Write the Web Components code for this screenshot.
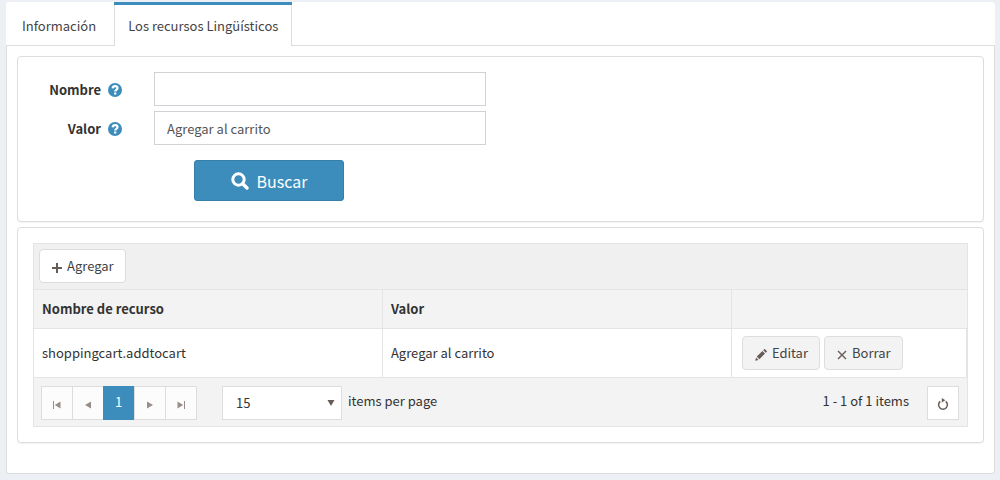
<!DOCTYPE html>
<html lang="es">
<head>
<meta charset="utf-8">
<meta name="viewport" content="width=device-width, initial-scale=1">
<title>Los recursos Lingüísticos</title>
<style>
  html { background: #ecf0f5; }
  body {
    margin: 0;
    padding: 2px 5px 6px 6px;
    font: 13px/20px "Noto Sans CJK SC", "Open Sans", sans-serif;
    color: #333;
    --accent: #3c8dbc;
    --line: #ddd;
    --muted: #f3f3f3;
  }
</style>
</head>
<body>
<tab-box>
  <tab-item slot="tabs">Información</tab-item>
  <tab-item slot="tabs" active>Los recursos Lingüísticos</tab-item>
  <panel-card>
    <search-form></search-form>
  </panel-card>
  <panel-card>
    <resource-grid></resource-grid>
  </panel-card>
</tab-box>

<script>
const define = (name, html, setup) => {
  const template = document.createElement('template');
  template.innerHTML = '<style>*{box-sizing:border-box}</style>' + html;
  customElements.define(name, class extends HTMLElement {
    constructor() {
      super();
      this.attachShadow({ mode: 'open' }).append(template.content.cloneNode(true));
    }
    connectedCallback() { if (setup) setup(this, this.shadowRoot); }
  });
};

const icons = {
  help: ['0 0 14 14', '<circle cx="7" cy="7" r="7" fill="currentColor"/><path d="M4.600 5.300C4.800 3.900 5.700 3.200 7.100 3.200c1.400 0 2.400.8 2.400 2 0 1.700-2.300 1.700-2.300 3.300" fill="none" stroke="#fff" stroke-width="2.200"/><path d="M6.100 9.500h2.200v2H6.100z" fill="#fff"/>'],
  search: ['0 0 18 18', '<circle cx="7.500" cy="7.500" r="5.700" fill="none" stroke="currentColor" stroke-width="3"/><path d="M11.700 11.700l4.300 4.300" stroke="currentColor" stroke-width="3.400" stroke-linecap="round"/>'],
  plus: ['0 0 10 10', '<path d="M5 0v10M0 5h10" stroke="currentColor" stroke-width="2"/>'],
  pencil: ['0 0 12 12', '<path d="M1.800 7.600L7.400 2l2.600 2.600-5.600 5.600zM8.200 1.200L9.100.3q.5-.5 1 0l1.600 1.600q.5.5 0 1l-.9.9zM1.100 8.500l2.400 2.400L.2 11.800z" fill="currentColor"/>'],
  close: ['0 0 10 10', '<path d="M1 1l8 8M9 1L1 9" stroke="currentColor" stroke-width="1.400"/>'],
  first: ['0 0 8 8', '<path d="M0 0h1v8H0zM7.500.5v7L1.800 4z" fill="currentColor"/>'],
  prev: ['0 0 8 8', '<path d="M7 .5v7L1 4z" fill="currentColor"/>'],
  next: ['0 0 8 8', '<path d="M1 .5v7L7 4z" fill="currentColor"/>'],
  last: ['0 0 8 8', '<path d="M7 0h1v8H7zM.5.5v7L6.200 4z" fill="currentColor"/>'],
  down: ['0 0 8 8', '<path d="M.5 1h7L4 7z" fill="currentColor"/>'],
  reload: ['0 0 12 12', '<path d="M3.300 3.300A4.400 4.400 0 1 0 8.700 3.300" fill="none" stroke="currentColor" stroke-width="1.500"/><path d="M4.800 0v4.600L8.300 2.300z" fill="currentColor"/>']
};

define('ui-icon', `
<style>:host{display:inline-flex;flex:none;width:var(--size,10px);height:var(--size,10px)} svg{width:100%;height:100%;display:block}</style>
<svg aria-hidden="true"></svg>`, (el, root) => {
  const [box, body] = icons[el.getAttribute('name')];
  const svg = root.querySelector('svg');
  svg.setAttribute('viewBox', box);
  svg.innerHTML = body;
});

define('tab-box', `
<style>
  :host{display:block}
  nav{display:flex;gap:2px;background:#fff;border-radius:3px 3px 0 0;box-shadow:inset 0 -1px var(--line)}
  main{display:flex;flex-direction:column;gap:5px;padding:10px 10px 30px;background:#fff;border:1px solid var(--line);border-top:0;border-radius:0 0 3px 3px}
</style>
<nav><slot name="tabs"></slot></nav>
<main><slot></slot></main>`);

define('tab-item', `
<style>
  :host{display:block}
  a{display:block;height:44px;padding:11px 16px 10px;border-top:3px solid transparent;color:#444;text-decoration:none}
  :host([active]) a{padding:11px 14px 10px;background:#fff;border-top-color:var(--accent);box-shadow:inset 1px 0 var(--line),inset -1px 0 var(--line)}
</style>
<a href="#"><slot></slot></a>`);

define('panel-card', `
<style>:host{display:block;padding:15px;border:1px solid var(--line);border-radius:4px;background:#fff;box-shadow:0 1px 1px #0000000d}</style>
<slot></slot>`);

define('form-field', `
<style>
  :host{display:grid;grid-template-columns:89px minmax(0,332px);align-items:center;column-gap:32px}
  .caption{display:flex;justify-content:flex-end;align-items:center;gap:7px;padding-top:2px}
  label{font-weight:700}
  ui-icon{--size:14px;color:var(--accent)}
  input{width:100%;height:34px;padding:6px 12px;border:1px solid #d2d2d6;border-radius:0;background:#fff;color:#555;font:inherit;outline:0}
</style>
<div class="caption"><label for="field"></label><ui-icon name="help"></ui-icon></div>
<input id="field" type="text">`, (el, root) => {
  root.querySelector('label').textContent = el.getAttribute('label');
  root.querySelector('input').value = el.getAttribute('value') || '';
});

define('search-form', `
<style>
  :host{display:block}
  form{display:flex;flex-direction:column;gap:5px;padding-bottom:5px}
  .submit{display:flex;padding:10px 0 0 161px}
  button{display:flex;align-items:center;justify-content:center;gap:8px;width:150px;height:41px;border:1px solid #367fa9;border-radius:3px;background:var(--accent);color:#fff;font:inherit;font-size:16px}
  ui-icon{--size:18px}
</style>
<form>
  <form-field label="Nombre"></form-field>
  <form-field label="Valor" value="Agregar al carrito"></form-field>
  <div class="submit"><button type="button"><ui-icon name="search"></ui-icon>Buscar</button></div>
</form>`);

define('grid-pager', `
<style>
  :host{display:flex;align-items:center;height:48px;padding:8px 8px 6px 7px;background:var(--muted)}
  nav{display:flex;border:solid var(--line);border-width:1px 1px 1px 0}
  button{display:flex;align-items:center;justify-content:center;width:31px;height:32px;padding:0;border:0;background:#fcfcfc;color:#988d89;font:inherit}
  nav button{box-shadow:inset 1px 0 var(--line)}
  nav button[aria-current]{height:34px;margin:-1px 0;padding-bottom:2px;background:var(--accent);color:#fff;box-shadow:none}
  nav ui-icon{--size:8px;margin-top:3px}
  .size{position:relative;width:120px;margin:0 6px 0 25px}
  select{appearance:none;width:100%;height:34px;padding:0 13px;border:1px solid var(--line);border-radius:0;background:#fff;color:#333;font:inherit}
  .size ui-icon{position:absolute;right:7px;top:13px;--size:8px;color:#665c58;pointer-events:none}
  label,.total{padding-bottom:4px}
  .total{margin-left:auto;margin-right:18px}
  .reload{width:32px;height:34px;border:1px solid var(--line);background:#fff;color:#665c58}
  .reload ui-icon{--size:12px;margin-top:2px}
</style>
<nav aria-label="Páginas">
  <button type="button"><ui-icon name="first"></ui-icon></button>
  <button type="button"><ui-icon name="prev"></ui-icon></button>
  <button type="button" aria-current="page">1</button>
  <button type="button"><ui-icon name="next"></ui-icon></button>
  <button type="button"><ui-icon name="last"></ui-icon></button>
</nav>
<div class="size"><select id="size"><option>15</option></select><ui-icon name="down"></ui-icon></div>
<label for="size">items per page</label>
<span class="total">1 - 1 of 1 items</span>
<button class="reload" type="button"><ui-icon name="reload"></ui-icon></button>`);

define('tool-button', `
<style>
  :host{display:inline-block}
  button{display:flex;align-items:center;gap:5px;height:34px;padding:0 11px 0 12px;border:1px solid var(--line);border-radius:4px;background:var(--fill,#fff);color:#444;font:inherit;white-space:nowrap}
  ::slotted(ui-icon){color:#665c58;margin-top:3px}
</style>
<button type="button"><slot name="icon"></slot><slot></slot></button>`);

define('resource-grid', `
<style>
  :host{display:block;border:1px solid #e4e4e4}
  .toolbar{display:flex;height:46px;padding:5px;background:#f0f0f0;border-bottom:1px solid #e4e4e4}
  table{width:100%;table-layout:fixed;border-collapse:separate;border-spacing:0}
  .name,.value{width:37.4%}
  th,td{padding:0 8px;text-align:left;border-bottom:1px solid #e4e4e4;border-right:1px solid #e4e4e4}
  th{height:39px;background:var(--muted)}
  th:last-child{border-right:0}
  td{height:49px}
  td:last-child{padding-left:10px}
  .actions{display:flex;gap:4px;--fill:#f3f3f3}
  .pencil{--size:12px}
</style>
<div class="toolbar"><tool-button><ui-icon slot="icon" name="plus"></ui-icon>Agregar</tool-button></div>
<table>
  <colgroup><col class="name"><col class="value"><col></colgroup>
  <thead><tr><th>Nombre de recurso</th><th>Valor</th><th></th></tr></thead>
  <tbody><tr>
    <td>shoppingcart.addtocart</td>
    <td>Agregar al carrito</td>
    <td><div class="actions">
      <tool-button><ui-icon class="pencil" slot="icon" name="pencil"></ui-icon>Editar</tool-button>
      <tool-button><ui-icon slot="icon" name="close"></ui-icon>Borrar</tool-button>
    </div></td>
  </tr></tbody>
</table>
<grid-pager></grid-pager>`);
</script>
</body>
</html>
